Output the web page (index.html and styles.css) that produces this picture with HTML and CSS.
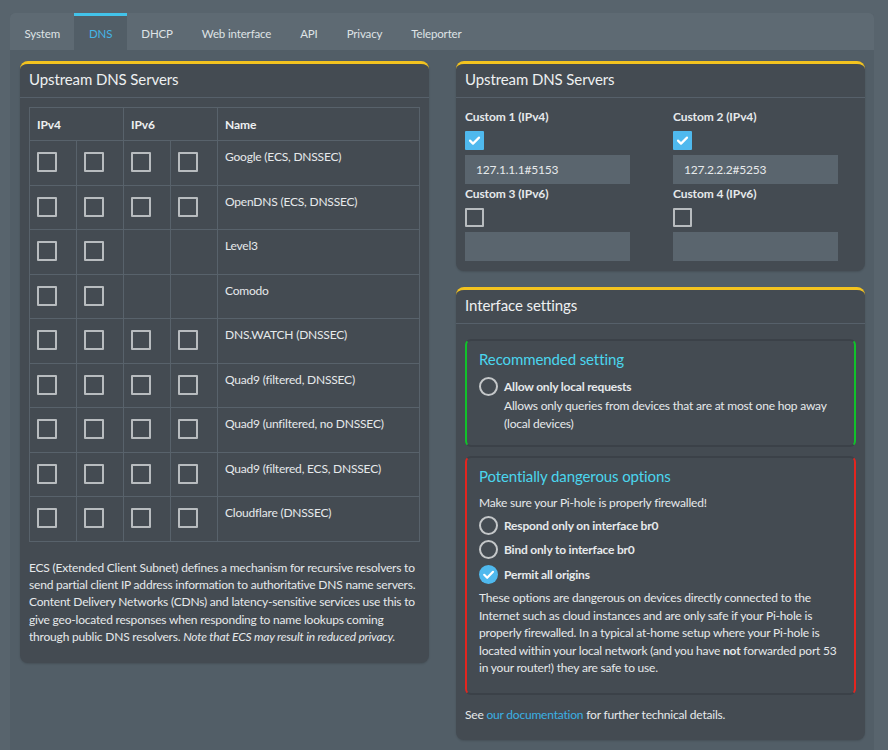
FILE: index.html
```html
<!DOCTYPE html>
<html lang="en">
<head>
<meta charset="utf-8">
<title>Settings - DNS</title>
<link rel="stylesheet" href="styles.css">
</head>
<body>
<div class="page">
  <div class="tabs">
    <nav class="tab-bar">
      <a class="tab">System</a>
      <a class="tab active">DNS</a>
      <a class="tab">DHCP</a>
      <a class="tab">Web interface</a>
      <a class="tab">API</a>
      <a class="tab">Privacy</a>
      <a class="tab">Teleporter</a>
    </nav>
    <div class="tab-content">
      <div class="col">
        <section class="box">
          <h3 class="box-title">Upstream DNS Servers</h3>
          <div class="box-body">
            <table class="dns-table">
              <thead>
                <tr><th colspan="2">IPv4</th><th colspan="2">IPv6</th><th class="name">Name</th></tr>
              </thead>
              <tbody>
                <tr><td><span class="cb"></span></td><td><span class="cb"></span></td><td><span class="cb"></span></td><td><span class="cb"></span></td><td class="name">Google (ECS, DNSSEC)</td></tr>
                <tr><td><span class="cb"></span></td><td><span class="cb"></span></td><td><span class="cb"></span></td><td><span class="cb"></span></td><td class="name">OpenDNS (ECS, DNSSEC)</td></tr>
                <tr><td><span class="cb"></span></td><td><span class="cb"></span></td><td></td><td></td><td class="name">Level3</td></tr>
                <tr><td><span class="cb"></span></td><td><span class="cb"></span></td><td></td><td></td><td class="name">Comodo</td></tr>
                <tr><td><span class="cb"></span></td><td><span class="cb"></span></td><td><span class="cb"></span></td><td><span class="cb"></span></td><td class="name">DNS.WATCH (DNSSEC)</td></tr>
                <tr><td><span class="cb"></span></td><td><span class="cb"></span></td><td><span class="cb"></span></td><td><span class="cb"></span></td><td class="name">Quad9 (filtered, DNSSEC)</td></tr>
                <tr><td><span class="cb"></span></td><td><span class="cb"></span></td><td><span class="cb"></span></td><td><span class="cb"></span></td><td class="name">Quad9 (unfiltered, no DNSSEC)</td></tr>
                <tr><td><span class="cb"></span></td><td><span class="cb"></span></td><td><span class="cb"></span></td><td><span class="cb"></span></td><td class="name">Quad9 (filtered, ECS, DNSSEC)</td></tr>
                <tr><td><span class="cb"></span></td><td><span class="cb"></span></td><td><span class="cb"></span></td><td><span class="cb"></span></td><td class="name">Cloudflare (DNSSEC)</td></tr>
              </tbody>
            </table>
            <p class="note">ECS (Extended Client Subnet) defines a mechanism for recursive resolvers to send partial client IP address information to authoritative DNS name servers. Content Delivery Networks (CDNs) and latency-sensitive services use this to give geo-located responses when responding to name lookups coming through public DNS resolvers. <em>Note that ECS may result in reduced privacy.</em></p>
          </div>
        </section>
      </div>
      <div class="col">
        <section class="box">
          <h3 class="box-title">Upstream DNS Servers</h3>
          <div class="box-body custom-grid">
            <div class="field">
              <label class="flabel">Custom 1 (IPv4)</label>
              <span class="cb checked"><svg viewBox="0 0 19 19" width="19" height="19"><path d="M5 9.6l3 3 6-6" fill="none" stroke="#fff" stroke-width="2.2" stroke-linecap="round" stroke-linejoin="round"/></svg></span>
              <div class="input">127.1.1.1#5153</div>
            </div>
            <div class="field">
              <label class="flabel">Custom 2 (IPv4)</label>
              <span class="cb checked"><svg viewBox="0 0 19 19" width="19" height="19"><path d="M5 9.6l3 3 6-6" fill="none" stroke="#fff" stroke-width="2.2" stroke-linecap="round" stroke-linejoin="round"/></svg></span>
              <div class="input">127.2.2.2#5253</div>
            </div>
            <div class="field">
              <label class="flabel">Custom 3 (IPv6)</label>
              <span class="cb"></span>
              <div class="input"></div>
            </div>
            <div class="field">
              <label class="flabel">Custom 4 (IPv6)</label>
              <span class="cb"></span>
              <div class="input"></div>
            </div>
          </div>
        </section>

        <section class="box box-gap">
          <h3 class="box-title">Interface settings</h3>
          <div class="box-body iface">
            <div class="callout ok">
              <h4 class="callout-title">Recommended setting</h4>
              <div class="radio-row">
                <span class="radio"></span>
                <div>
                  <strong>Allow only local requests</strong>
                  <p class="desc">Allows only queries from devices that are at most one hop away (local devices)</p>
                </div>
              </div>
            </div>
            <div class="callout danger">
              <h4 class="callout-title">Potentially dangerous options</h4>
              <p class="warn">Make sure your Pi-hole is properly firewalled!</p>
              <div class="radio-row"><span class="radio"></span><strong>Respond only on interface br0</strong></div>
              <div class="radio-row"><span class="radio"></span><strong>Bind only to interface br0</strong></div>
              <div class="radio-row"><span class="radio checked"><svg viewBox="0 0 19 19" width="19" height="19"><path d="M5.2 9.8l3 3 5.8-6" fill="none" stroke="#fff" stroke-width="2.2" stroke-linecap="round" stroke-linejoin="round"/></svg></span><strong>Permit all origins</strong></div>
              <p class="desc">These options are dangerous on devices directly connected to the Internet such as cloud instances and are only safe if your Pi-hole is properly firewalled. In a typical at-home setup where your Pi-hole is located within your local network (and you have <strong>not</strong> forwarded port 53 in your router!) they are safe to use.</p>
            </div>
            <p class="see">See <a class="link">our documentation</a> for further technical details.</p>
          </div>
        </section>
      </div>
    </div>
  </div>
</div>
</body>
</html>
```
FILE: styles.css
```css
* { box-sizing: border-box; }
html, body { margin: 0; padding: 0; }
body {
  background: #58646d;
  font-family: Lato, "Liberation Sans", sans-serif;
  font-size: 12px;
  letter-spacing: -0.2px;
  color: #e6e9eb;
  height: 750px;
  overflow: hidden;
}
.page { padding: 13px 14px 0 10px; }
.tabs {
  background: #525e67;
  border-radius: 5px 5px 0 0;
  min-height: 740px;
}
.tab-bar {
  display: flex;
  background: #5e6a73;
  height: 37px;
  border-radius: 5px 5px 0 0;
}
.tab {
  display: block;
  padding: 2px 14.5px 0;
  line-height: 32px;
  color: #dfe3e6;
  font-size: 11.5px;
  letter-spacing: -0.15px;
  border-top: 3px solid transparent;
}
.tab.active {
  background: #525e67;
  border-top-color: #42c3ea;
  color: #44b5e6;
}
.tab-content {
  display: grid;
  grid-template-columns: 409px 409px;
  column-gap: 27px;
  padding: 11px 9px 0 10px;
  align-items: start;
}
.box {
  background: #444b52;
  border-top: 3px solid #f3c31f;
  border-radius: 8px;
  box-shadow: 0 1px 2px rgba(0,0,0,0.15);
}
.box-gap { margin-top: 16px; }
.box-title {
  margin: 0;
  font-weight: normal;
  font-size: 15px;
  letter-spacing: -0.1px;
  color: #eef0f1;
  padding: 6px 9px 0;
  height: 34px;
  border-bottom: 1px solid #56606a;
}
.box-body { padding: 9px 9px 10px; }

.dns-table {
  width: 391px;
  border-collapse: collapse;
  border: 1px solid #58626b;
}
.dns-table th, .dns-table td {
  border: 1px solid #58626b;
  padding: 0;
  vertical-align: top;
  text-align: left;
}
.dns-table th {
  height: 33px;
  padding: 9px 7px 0;
  font-weight: bold;
  font-size: 12px;
  letter-spacing: -0.1px;
  color: #eef0f1;
}
.dns-table td { width: 47px; height: 44.5px; padding: 11px 0 0 7px; }
.dns-table td.name, .dns-table th.name { width: auto; }
.dns-table td.name { padding: 8px 7px 0; }

.cb {
  display: block;
  width: 20px;
  height: 20px;
  border: 2px solid #b8bcbf;
  border-radius: 1px;
}
.cb.checked {
  background: #4fb9ee;
  border: none;
  width: 19px;
  height: 19px;
}
.cb svg { display: block; }

.note {
  margin: 17px 0 7px;
  line-height: 17.4px;
}
.note em { font-style: italic; }

.custom-grid {
  display: grid;
  grid-template-columns: 208px 1fr;
  padding: 9px 9px 10px;
}
.flabel {
  display: block;
  font-weight: bold;
  font-size: 12px;
  letter-spacing: -0.1px;
  line-height: 17px;
  margin-top: 1px;
  margin-bottom: 6px;
}
.field .cb { margin-bottom: 5px; }
.field .cb:not(.checked) { width: 19px; height: 19px; }
.input {
  width: 165px;
  height: 29px;
  background: #5a656e;
  padding: 0 11px;
  line-height: 29px;
  font-size: 12px;
  letter-spacing: -0.2px;
  color: #e6e9eb;
}

.iface { padding: 15px 9px 16px; }
.callout {
  border-radius: 6px;
  border: 2px solid #3b4148;
  padding: 8px 12px 12px;
}
.callout.ok { border-left-color: #10c22a; border-right-color: #10c22a; }
.callout.danger { border-left-color: #e3251f; border-right-color: #e3251f; margin-top: 9px; padding-bottom: 16px; }
.callout-title {
  margin: 0 0 8px;
  font-weight: normal;
  font-size: 15px;
  line-height: 20px;
  letter-spacing: -0.1px;
  color: #4bd6ee;
}
.radio-row {
  display: flex;
  align-items: flex-start;
  gap: 6px;
  min-height: 24.5px;
}
.radio-row strong { font-size: 12px; letter-spacing: -0.2px; line-height: 19px; display: block; }
.radio {
  flex: none;
  width: 19px;
  height: 19px;
  border-radius: 50%;
  border: 2px solid #c4c7c9;
}
.radio.checked { background: #4fb9ee; border: none; }
.radio svg { display: block; }
.desc { margin: 0; line-height: 17.6px; }
.ok .desc { line-height: 18px; margin-top: 1px; }
.ok .radio-row { min-height: 0; }
.warn { margin: 0 0 3.5px; line-height: 18px; }
.see { margin: 11px 0 0; line-height: 18px; }
.link { color: #3bb0e3; }
```
